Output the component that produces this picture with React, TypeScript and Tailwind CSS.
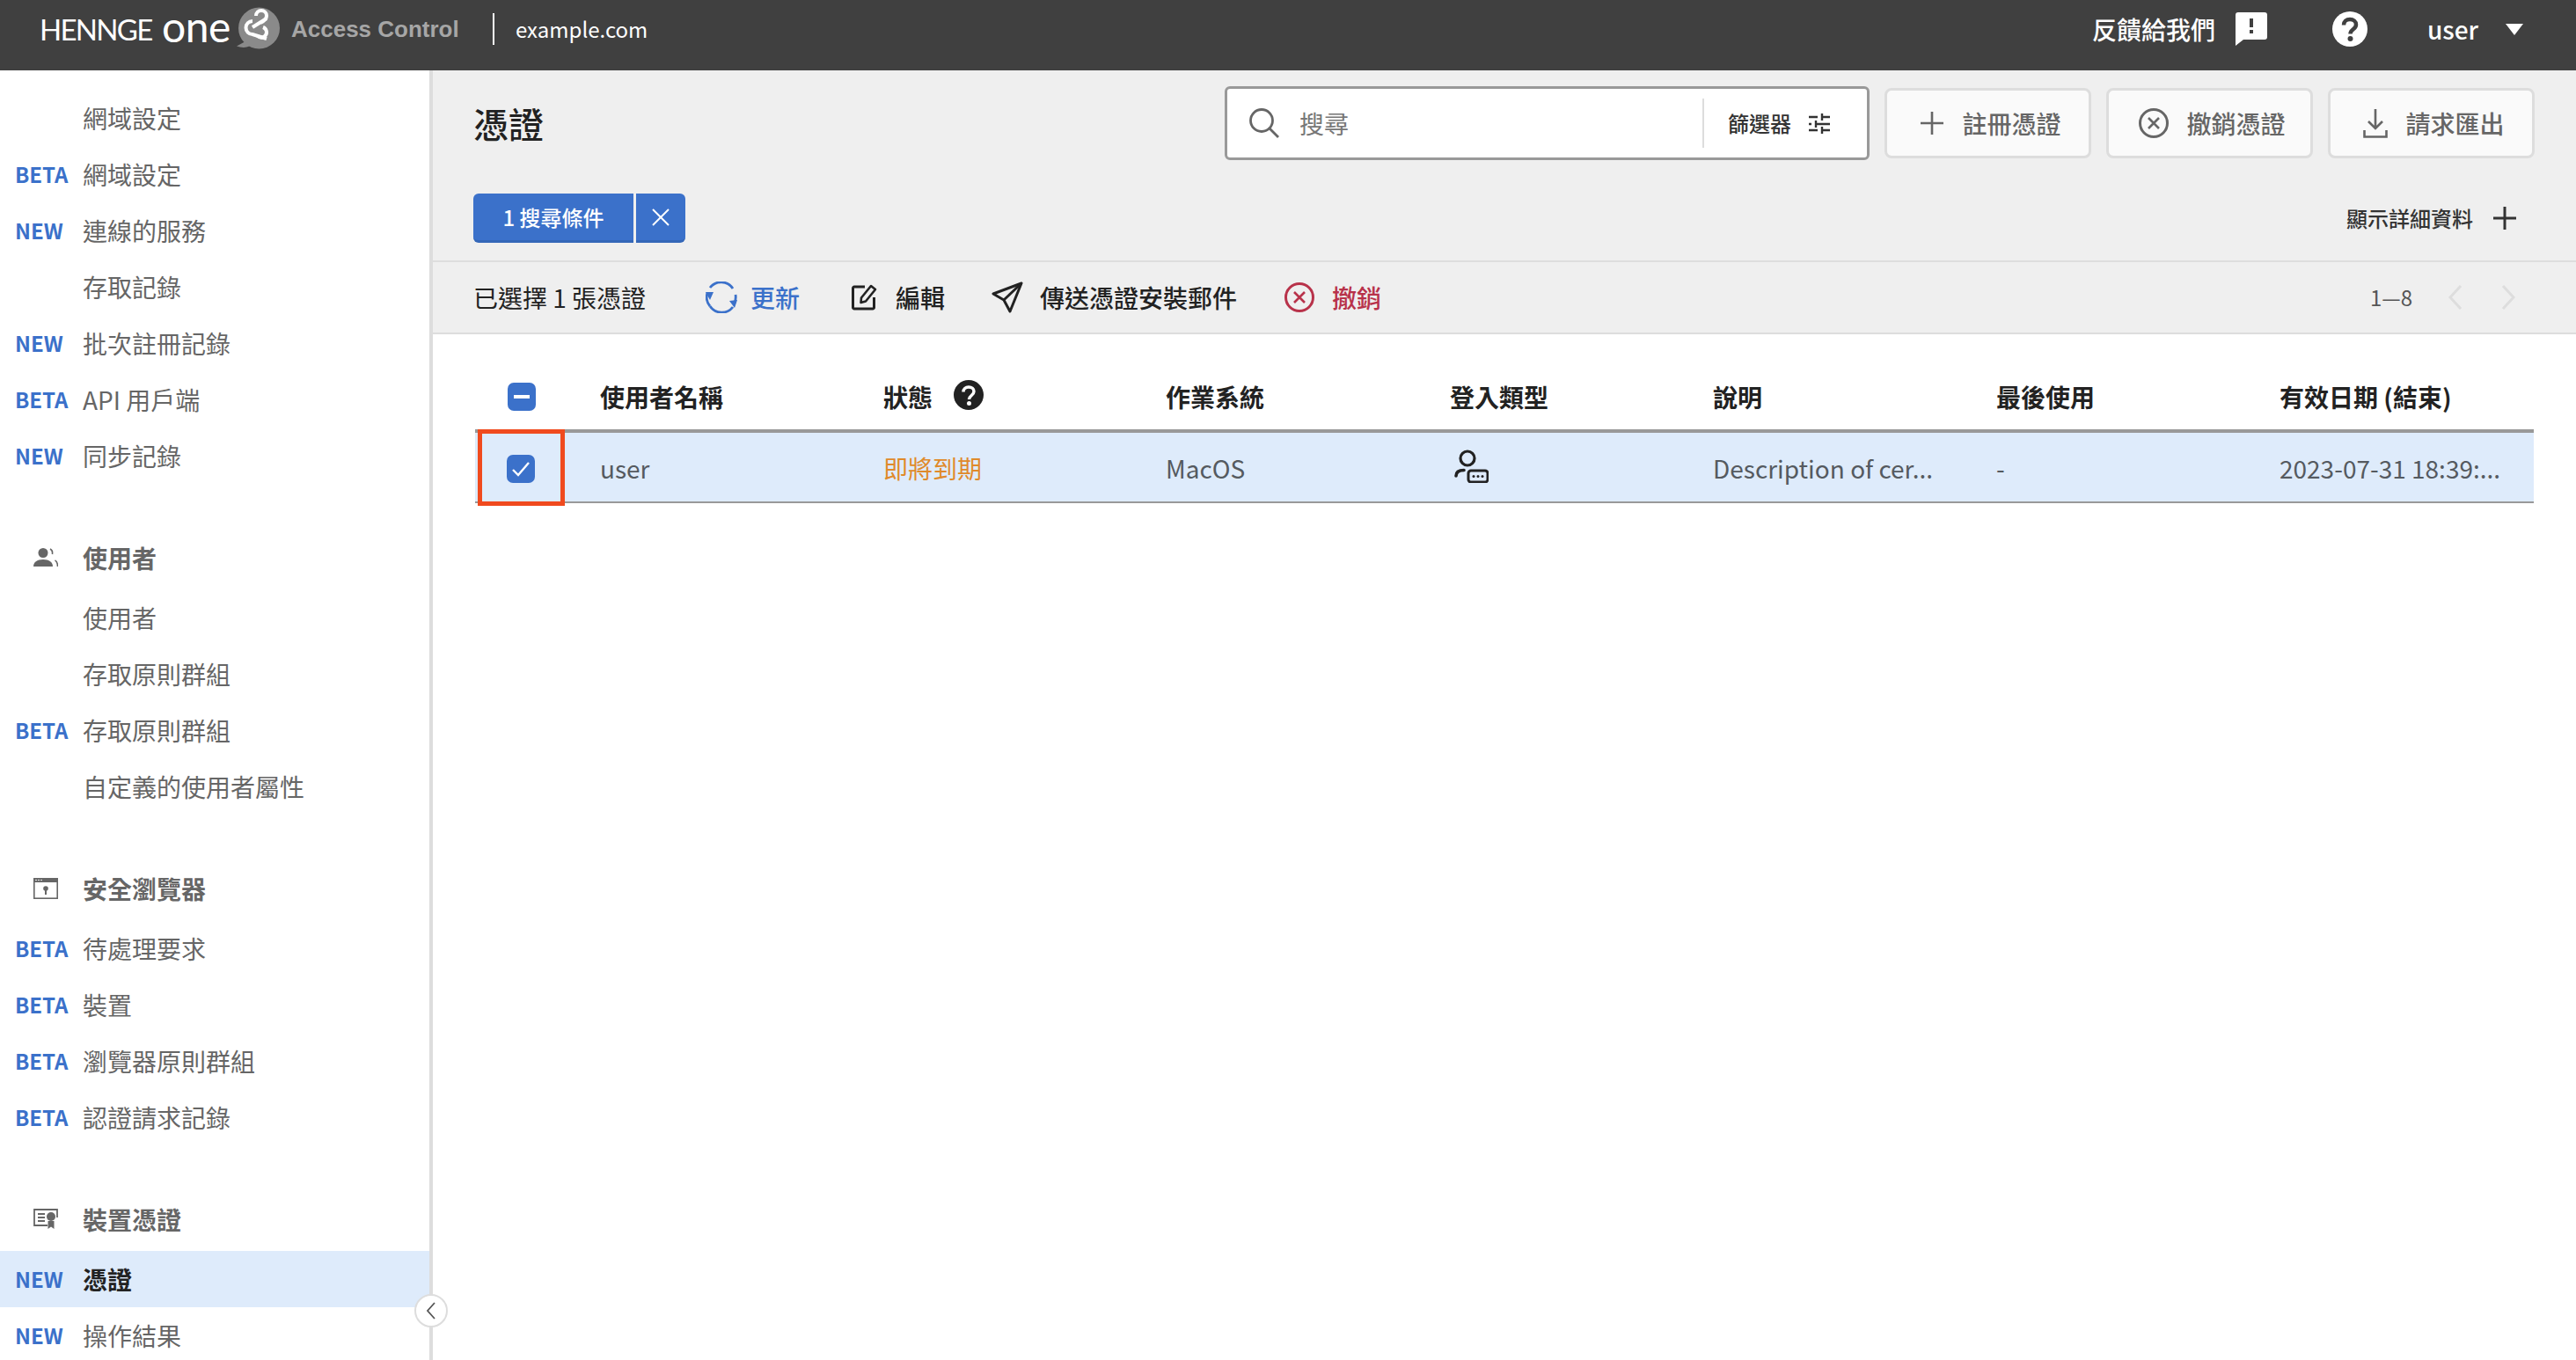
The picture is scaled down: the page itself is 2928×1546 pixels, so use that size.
import React from "react";

const Badge = ({ t }: { t?: string }) => (
  <span className="w-[94px] shrink-0 pl-[17px] text-[24px] font-bold leading-none text-[#3b71ca]">{t}</span>
);

const Row = ({ badge, label, active }: { badge?: string; label: string; active?: boolean }) => (
  <div className={active ? "flex h-16 items-center bg-[#deebfb]" : "flex h-16 items-center"}>
    <Badge t={badge} />
    <span className={active ? "text-[28px] font-bold text-[#222222]" : "text-[28px] text-[#666666]"}>{label}</span>
  </div>
);

const Section = ({ icon, label }: { icon: React.ReactNode; label: string }) => (
  <div className="mt-12 flex h-[72px] items-center">
    <span className="flex w-[94px] shrink-0 justify-end pr-[28px]">{icon}</span>
    <span className="text-[28px] font-bold text-[#666666]">{label}</span>
  </div>
);

const UsersIcon = () => (
  <svg width="28" height="24" viewBox="0 0 28 24" fill="none">
    <circle cx="11" cy="6.500" r="5.500" fill="#666" />
    <path d="M0 22c0-5 4-8 11-8s11 3 11 8z" fill="#666" />
    <path d="M19 2c2 1 3 3 2.400 6M24.500 15c2 1 3 3 3 7" stroke="#666" strokeWidth="1.600" />
  </svg>
);
const BrowserIcon = () => (
  <svg width="28" height="24" viewBox="0 0 28 24" fill="none">
    <rect x="0.800" y="0.800" width="26.400" height="22.400" stroke="#666" strokeWidth="1.600" />
    <rect x="0" y="0" width="28" height="5" fill="#666" />
    <circle cx="3" cy="2.500" r="0.800" fill="#fff" />
    <circle cx="6" cy="2.500" r="0.800" fill="#fff" />
    <circle cx="9" cy="2.500" r="0.800" fill="#fff" />
    <circle cx="14" cy="12" r="2.800" fill="#666" />
    <rect x="13" y="13" width="2" height="6" fill="#666" />
  </svg>
);
const CertIcon = () => (
  <svg width="28" height="24" viewBox="0 0 28 24" fill="none">
    <path d="M27 10V1H1v18h15" stroke="#666" strokeWidth="1.800" />
    <path d="M5 6h8M5 10h8M5 14h8" stroke="#666" strokeWidth="1.800" />
    <circle cx="20" cy="9" r="5" fill="#666" />
    <path d="M16.500 14h7v9l-3.500-2.500-3.500 2.500z" fill="#666" />
  </svg>
);

const Logo = () => (
  <div className="flex items-center text-white">
    <span className="ml-[45px] w-[139px] font-['Lato',sans-serif] text-[33px] font-normal leading-none tracking-[-1.700px]">HENNGE</span>
    <span className="w-[85px] font-['Lato',sans-serif] text-[48px] font-normal leading-[40px] tracking-[-0.500px] mt-[-6px]">one</span>
    <svg width="50" height="52" viewBox="0 0 50 52" fill="none" className="mt-[-2px] shrink-0">
      <circle cx="25.500" cy="26" r="23.500" fill="#8a8a8a" />
      <path d="M10 41L0 46.500c6 2 11 2 17-1z" fill="#8a8a8a" />
      <g transform="translate(-6 1)">
        <path d="M40 14l-16 10" stroke="#fff" strokeWidth="4" />
        <path d="M24 17a7.500 7.500 0 1 0 0 15l16 5" stroke="#fff" strokeWidth="4" fill="none" />
        <path d="M28 11a6 6 0 0 1 12 0c0 4-3 6-7 8M36 24a6 6 0 1 1-7 9" stroke="#fff" strokeWidth="4" fill="none" />
      </g>
    </svg>
    <span className="ml-[12px] w-[229px] font-['Liberation_Sans',sans-serif] text-[26px] font-bold leading-none text-[#a6a6a6]">Access Control</span>
    <span className="h-9 w-[2px] bg-white" />
    <span className="ml-[24px] text-[24px] leading-none">example.com</span>
  </div>
);

const PlusIcon = ({ c = "#666", w = 2.600 }: { c?: string; w?: number }) => (
  <svg width="28" height="28" viewBox="0 0 28 28" fill="none">
    <path d="M14 1v26M1 14h26" stroke={c} strokeWidth={w} />
  </svg>
);
const XCircle = ({ c }: { c: string }) => (
  <svg width="34" height="34" viewBox="0 0 34 34" fill="none">
    <circle cx="17" cy="17" r="15.500" stroke={c} strokeWidth="3" />
    <path d="M11 11l12 12M23 11L11 23" stroke={c} strokeWidth="2.600" />
  </svg>
);
const DownloadIcon = () => (
  <svg width="28" height="34" viewBox="0 0 28 34" fill="none">
    <path d="M14 1v21M6 15l8 8 8-8" stroke="#666" strokeWidth="2.600" />
    <path d="M1.500 25v7.500h25V25" stroke="#666" strokeWidth="2.600" />
  </svg>
);

const TopButton = ({ icon, label }: { icon: React.ReactNode; label: string }) => (
  <div className="flex h-20 w-[235px] items-center justify-center gap-[20px] rounded-lg border-[3px] border-[#dddddd] bg-[#fafafa] pl-[6px] text-[28px] font-medium text-[#666666]">
    {icon}
    <span>{label}</span>
  </div>
);

const Header = () => (
  <header className="flex h-20 shrink-0 items-center bg-[#404040] pb-[14px] text-white">
    <Logo />
    <div className="ml-auto flex items-center pr-[60px]">
      <span className="text-[28px] font-medium leading-none">反饋給我們</span>
      <svg width="36" height="38" viewBox="0 0 36 38" className="ml-[23px]">
        <path d="M3 0h30a3 3 0 0 1 3 3v25a3 3 0 0 1-3 3H9l-9 7V3a3 3 0 0 1 3-3z" fill="#fff" />
        <rect x="16" y="7" width="4" height="10" fill="#404040" />
        <rect x="16" y="20" width="4" height="4" fill="#404040" />
      </svg>
      <svg width="40" height="40" viewBox="0 0 40 40" className="ml-[74px]">
        <circle cx="20" cy="20" r="20" fill="#fff" />
        <path d="M13 15.500c0-4 3-6.500 7-6.500s7 2.500 7 6c0 5.500-6.500 5-6.500 10.500" stroke="#404040" strokeWidth="4.500" fill="none" />
        <circle cx="20.500" cy="31" r="3" fill="#404040" />
      </svg>
      <span className="ml-[68px] text-[28px] font-medium leading-none">user</span>
      <svg width="20" height="13" viewBox="0 0 20 13" className="ml-[31px]">
        <path d="M0 0h20L10 13z" fill="#fff" />
      </svg>
    </div>
  </header>
);

const Sidebar = () => (
  <aside className="relative h-full w-[492px] shrink-0 border-r-4 border-[#dddddd] bg-white">
    <div className="h-full overflow-hidden pt-[22px]">
      <Row label="網域設定" />
      <Row badge="BETA" label="網域設定" />
      <Row badge="NEW" label="連線的服務" />
      <Row label="存取記錄" />
      <Row badge="NEW" label="批次註冊記錄" />
      <Row badge="BETA" label="API 用戶端" />
      <Row badge="NEW" label="同步記錄" />
      <Section icon={<UsersIcon />} label="使用者" />
      <Row label="使用者" />
      <Row label="存取原則群組" />
      <Row badge="BETA" label="存取原則群組" />
      <Row label="自定義的使用者屬性" />
      <Section icon={<BrowserIcon />} label="安全瀏覽器" />
      <Row badge="BETA" label="待處理要求" />
      <Row badge="BETA" label="裝置" />
      <Row badge="BETA" label="瀏覽器原則群組" />
      <Row badge="BETA" label="認證請求記錄" />
      <Section icon={<CertIcon />} label="裝置憑證" />
      <Row badge="NEW" label="憑證" active />
      <Row badge="NEW" label="操作結果" />
    </div>
    <div className="absolute right-[-21px] top-[1391px] flex h-[38px] w-[38px] items-center justify-center rounded-full border-2 border-[#dddddd] bg-white">
      <svg width="12" height="20" viewBox="0 0 12 20" fill="none">
        <path d="M10 1L2 10l8 9" stroke="#555" strokeWidth="1.800" />
      </svg>
    </div>
  </aside>
);

const SearchBar = () => (
  <div className="flex h-[84px] w-[733px] items-center rounded-md border-[3px] border-[#999999] bg-white">
    <svg width="34" height="34" viewBox="0 0 34 34" fill="none" className="ml-[25px]">
      <circle cx="14" cy="14" r="12.500" stroke="#666" strokeWidth="2.800" />
      <path d="M23 23l10 10" stroke="#666" strokeWidth="2.800" />
    </svg>
    <span className="ml-[23px] text-[28px] text-[#777777]">搜尋</span>
    <span className="ml-auto h-14 w-[2px] bg-[#dddddd]" />
    <span className="ml-[27px] text-[24px] font-medium text-[#333333]">篩選器</span>
    <svg width="24" height="24" viewBox="0 0 24 24" fill="none" className="ml-[20px] mr-[42px]">
      <path d="M0 5h10M15 5h9M0 13h3M8 13h16M0 20h10M15 20h9M15 1v8M8 9v8M15 16v8" stroke="#333" strokeWidth="2.400" />
    </svg>
  </div>
);

const TopArea = () => (
  <div className="h-[218px] shrink-0 border-b-2 border-[#dddddd] bg-[#efefef] pl-[46px] pr-[47px] pt-[18px]">
    <div className="flex h-[84px] items-center gap-[17px]">
      <h1 className="mr-auto text-[40px] font-medium leading-none text-[#222222]">憑證</h1>
      <SearchBar />
      <TopButton icon={<PlusIcon />} label="註冊憑證" />
      <TopButton icon={<XCircle c="#666" />} label="撤銷憑證" />
      <TopButton icon={<DownloadIcon />} label="請求匯出" />
    </div>
    <div className="mt-[38px] flex h-14 items-center">
      <div className="flex h-14 w-[182px] items-center justify-center rounded-l-md border-b-[3px] border-[#3467b8] bg-[#3b71ca] text-[24px] font-medium text-white">1 搜尋條件</div>
      <div className="ml-[3px] flex h-14 w-[56px] items-center justify-center rounded-r-md border-b-[3px] border-[#3467b8] bg-[#3b71ca]">
        <svg width="20" height="20" viewBox="0 0 20 20" fill="none">
          <path d="M1 1l18 18M19 1L1 19" stroke="#fff" strokeWidth="2" />
        </svg>
      </div>
      <span className="ml-auto text-[24px] font-medium text-[#333333]">顯示詳細資料</span>
      <span className="ml-[22px] mr-[20px] flex">
        <PlusIcon c="#333" w={3} />
      </span>
    </div>
  </div>
);

const Action = ({ icon, label, cls, gap }: { icon: React.ReactNode; label: string; cls: string; gap: string }) => (
  <div className={`flex items-center ${gap}`}>
    {icon}
    <span className={cls}>{label}</span>
  </div>
);

const Toolbar = () => (
  <div className="flex h-[82px] shrink-0 items-center border-b-2 border-[#dddddd] bg-[#efefef] pl-[46px] pr-[69px] text-[28px]">
    <span className="w-[264px] font-normal text-[#222222]">已選擇 1 張憑證</span>
    <Action
      gap="gap-[15px]"
      cls="font-medium text-[#3b71ca]"
      label="更新"
      icon={
        <svg width="36" height="36" viewBox="0 0 36 36" fill="none">
          <path d="M31 8a16 16 0 0 0-26-1M5 28a16 16 0 0 0 26 1" stroke="#3b71ca" strokeWidth="2.800" />
          <path d="M5 28a16 16 0 0 1-3-15" stroke="#3b71ca" strokeWidth="2.800" />
          <path d="M33 24a16 16 0 0 0 1-9" stroke="#3b71ca" strokeWidth="2.800" />
          <path d="M0 12l9 0-4 9zM27 22l9-1-3 9z" fill="#3b71ca" />
        </svg>
      }
    />
    <span className="w-[59px]" />
    <Action
      gap="gap-[21px]"
      cls="font-medium text-[#222222]"
      label="編輯"
      icon={
        <svg width="29" height="30" viewBox="0 0 29 30" fill="none">
          <path d="M15 3H3a1.500 1.500 0 0 0-1.500 1.500v22A1.500 1.500 0 0 0 3 28h21a1.500 1.500 0 0 0 1.500-1.500V15" stroke="#222" strokeWidth="3" />
          <path d="M11 15.500L22 2l5 4-11 13.500-5.500 1.500z" stroke="#222" strokeWidth="2.600" strokeLinejoin="round" />
        </svg>
      }
    />
    <span className="w-[53px]" />
    <Action
      gap="gap-[19px]"
      cls="font-medium text-[#222222]"
      label="傳送憑證安裝郵件"
      icon={
        <svg width="36" height="36" viewBox="0 0 36 36" fill="none">
          <path d="M34 2L2 14l12 7 7 13z" stroke="#222" strokeWidth="3" strokeLinejoin="round" />
          <path d="M34 2L14 21" stroke="#222" strokeWidth="3" />
        </svg>
      }
    />
    <span className="w-[54px]" />
    <Action gap="gap-[20px]" cls="font-medium text-[#b8324a]" label="撤銷" icon={<XCircle c="#b8324a" />} />
    <span className="ml-auto text-[24px] text-[#555555]">1—8</span>
    <svg width="16" height="28" viewBox="0 0 16 28" fill="none" className="ml-[41px]">
      <path d="M14 1L2 14l12 13" stroke="#dddddd" strokeWidth="3" />
    </svg>
    <svg width="16" height="28" viewBox="0 0 16 28" fill="none" className="ml-[44px]">
      <path d="M2 1l12 13L2 27" stroke="#dddddd" strokeWidth="3" />
    </svg>
  </div>
);

const Check = ({ children }: { children: React.ReactNode }) => (
  <span className="flex h-8 w-8 items-center justify-center rounded-[7px] bg-[#3b71ca]">{children}</span>
);

const Table = () => (
  <div className="pl-[48px] pr-[48px] pt-[34px]">
    <div className="grid h-[74px] grid-cols-[142px_322px_321px_323px_299px_322px_322px_289px] items-center text-[28px] font-bold text-[#222222]">
      <div className="pl-[37px]">
        <Check>
          <span className="h-1 w-[18px] bg-white" />
        </Check>
      </div>
      <div>使用者名稱</div>
      <div className="flex items-center gap-[24px]">
        <span>狀態</span>
        <svg width="34" height="34" viewBox="0 0 34 34" className="mt-[-4px]">
          <circle cx="17" cy="17" r="17" fill="#222" />
          <path d="M11 13.500c0-3.500 2.500-5.500 6-5.500s6 2 6 5c0 4.500-5.500 4.500-5.500 9" stroke="#fff" strokeWidth="3.500" fill="none" />
          <circle cx="17.500" cy="26.500" r="2.500" fill="#fff" />
        </svg>
      </div>
      <div>作業系統</div>
      <div>登入類型</div>
      <div>說明</div>
      <div>最後使用</div>
      <div>有效日期 (結束)</div>
    </div>
    <div className="relative grid h-[84px] grid-cols-[142px_322px_321px_323px_299px_322px_322px_289px] items-center border-b-2 border-t-4 border-[#999999] bg-[#deebfb] pt-[2px] text-[28px] text-[#555a60]">
      <div className="pl-[36px]">
        <span className="mt-[2px] flex">
          <Check>
            <svg width="22" height="18" viewBox="0 0 22 18" fill="none">
              <path d="M2 10l6 6L20 2" stroke="#fff" strokeWidth="2.400" />
            </svg>
          </Check>
        </span>
      </div>
      <div>user</div>
      <div className="text-[#e08a2a]">即將到期</div>
      <div>MacOS</div>
      <div>
        <svg width="44" height="38" viewBox="0 0 44 38" fill="none" className="mt-[-4px]">
          <circle cx="20" cy="10" r="8" stroke="#222" strokeWidth="3.200" />
          <path d="M7 30c0-4 3-6.500 9-6.500" stroke="#222" strokeWidth="3.600" strokeLinecap="round" />
          <rect x="21" y="24" width="22" height="13" rx="3" stroke="#222" strokeWidth="3" />
          <circle cx="27" cy="30.500" r="1.500" fill="#222" />
          <circle cx="32" cy="30.500" r="1.500" fill="#222" />
          <circle cx="37" cy="30.500" r="1.500" fill="#222" />
        </svg>
      </div>
      <div>Description of cer...</div>
      <div>-</div>
      <div>2023-07-31 18:39:...</div>
      <div className="absolute left-[3px] top-[-4px] h-[87px] w-[99px] border-[5px] border-[#f04a1e]" />
    </div>
  </div>
);

export default function App() {
  return (
    <div className="flex h-screen w-full flex-col overflow-hidden bg-white font-['Noto_Sans_CJK_TC','Noto_Sans',sans-serif]">
      <Header />
      <div className="flex min-h-0 flex-1">
        <Sidebar />
        <main className="flex min-w-0 flex-1 flex-col">
          <TopArea />
          <Toolbar />
          <Table />
        </main>
      </div>
    </div>
  );
}
